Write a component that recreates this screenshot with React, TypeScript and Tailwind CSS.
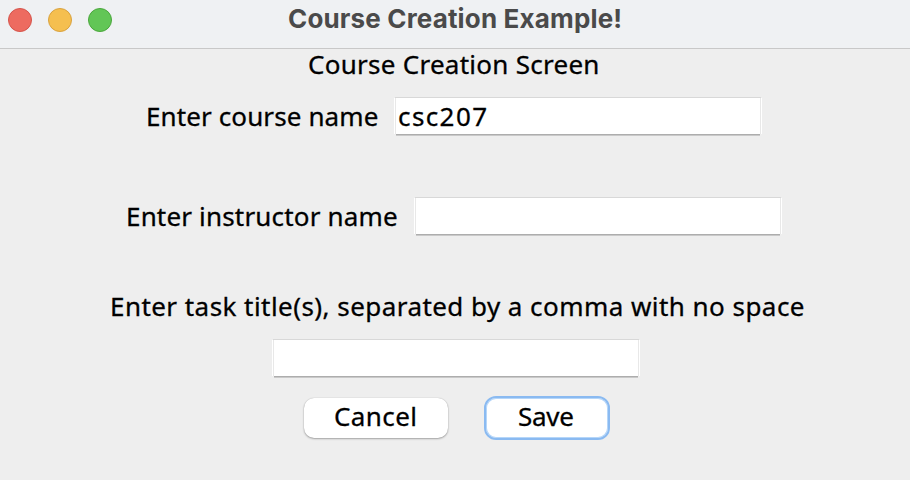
const label =
  "block whitespace-nowrap text-[26px] leading-[36px] text-black [-webkit-text-stroke:0.3px_black]";

function Field({ value }: { value?: string }) {
  return (
    <div className="flex h-[39px] w-[368px] flex-col">
      <div className="mx-px h-px bg-[#d8d8d8]" />
      <div className="flex h-[36px] border-x border-white">
        <div className="flex grow items-center border-x border-[#e8e8e8] bg-white pl-[2px]">
          {value && <span className={label + " tracking-[1.4px]"}>{value}</span>}
        </div>
      </div>
      <div className="mx-[2px] h-px bg-[#adadad]" />
      <div className="mx-[2px] h-px bg-[#c9c9c9]" />
    </div>
  );
}

export default function App() {
  return (
    <div className="flex h-[480px] w-[910px] flex-col overflow-hidden bg-[#eeeeee] font-['Noto_Sans',sans-serif]">
      <header className="grid h-[49px] shrink-0 grid-cols-[280px_350px_280px] border-b border-[#c8c8c8] bg-[#eff1f3]">
        <div className="flex gap-4 pt-2 pl-2">
          <span className="size-6 rounded-full border border-[#d5544b] bg-[#ed6b60]" />
          <span className="size-6 rounded-full border border-[#d9a23f] bg-[#f5bf4f]" />
          <span className="size-6 rounded-full border border-[#4aa73c] bg-[#62c656]" />
        </div>
        <h1 className="pt-px pl-2 font-['Inter',sans-serif] text-[26px] leading-[36px] font-bold tracking-[0.16px] whitespace-nowrap text-[#4a4a4a]">
          <span>Course Creation Example!</span>
        </h1>
      </header>
      <main className="flex flex-col">
        <div className="h-[48px] pl-[308px]">
          <span className={label + " -mt-[3px] tracking-[0.27px]"}>Course Creation Screen</span>
        </div>
        <div className="flex h-[100px] pl-[146px]">
          <div className="w-[248px] pt-px">
            <span className={label + " tracking-[0.11px]"}>Enter course name</span>
          </div>
          <Field value="csc207" />
        </div>
        <div className="flex h-[92px] pl-[126px]">
          <div className="w-[288px] pt-px">
            <span className={label + " tracking-[0.17px]"}>Enter instructor name</span>
          </div>
          <Field />
        </div>
        <div className="h-[50px] pl-[110px]">
          <span className={label + " -mt-px tracking-[0.45px]"}>
            Enter task title(s), separated by a comma with no space
          </span>
        </div>
        <div className="h-[57px] pl-[272px]">
          <Field />
        </div>
        <div className="flex items-start pl-[304px]">
          <button className="mt-[2px] h-10 w-[144px] rounded-[10px] bg-white pb-[4px] pl-[30px] text-left shadow-[0_0_1px_rgba(0,0,0,0.25),0_1px_2px_rgba(0,0,0,0.3)]">
            <span className={label + " tracking-[0.4px]"}>Cancel</span>
          </button>
          <button className="ml-9 h-11 w-[126px] rounded-[12px] border-2 border-[#8abaf1] bg-white pb-[6px] pl-[32px] text-left shadow-[inset_0_0_0_1px_#b5d6f9]">
            <span className={label + " tracking-[-0.3px]"}>Save</span>
          </button>
        </div>
      </main>
    </div>
  );
}
